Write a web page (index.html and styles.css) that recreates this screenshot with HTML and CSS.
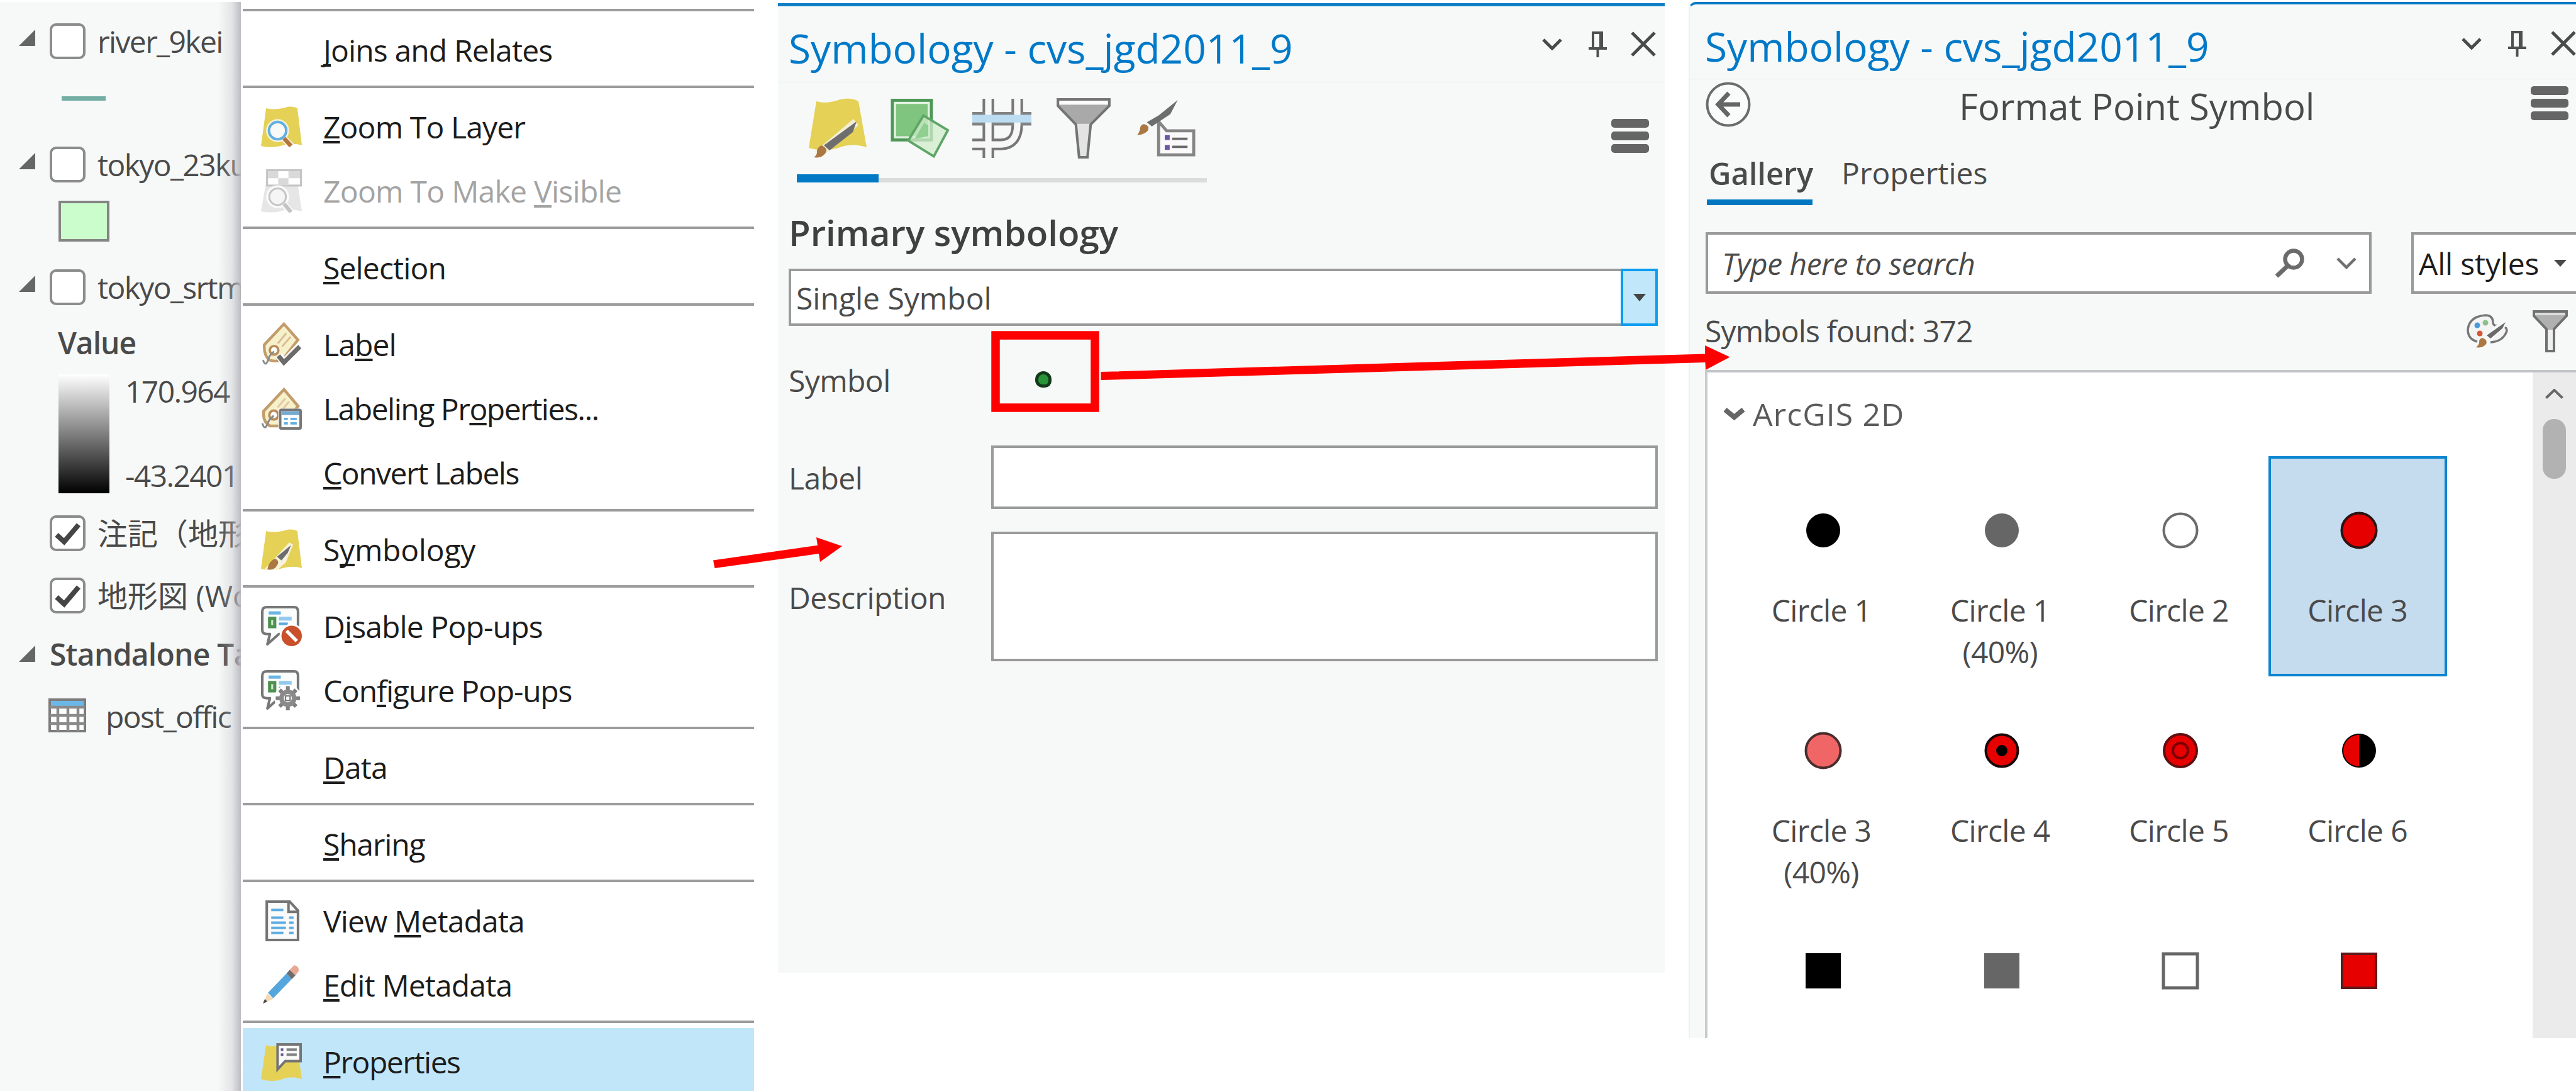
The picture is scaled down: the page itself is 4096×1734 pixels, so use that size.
FILE: index.html
```html
<!DOCTYPE html>
<html lang="en">
<head>
<meta charset="utf-8">
<title>Symbology - cvs_jgd2011_9</title>
<link rel="stylesheet" href="styles.css">
</head>
<body>
<svg class="defs" width="0" height="0">
  <defs>
    <path id="sheet" d="M8 3C20 6 31 4 41 1C48 0 53 1 57 3L64 61C54 58 45 58 34 61C24 64 11 65 0 62Z" fill="#e5d155"/>
    <g id="chevron"><path d="M2 3L16 17L30 3" fill="none" stroke="#4a4a4a" stroke-width="5"/></g>
    <g id="pin"><path d="M6 2H23M7 0V27M20 0V27" fill="none" stroke="#4f4f4f" stroke-width="4"/><path d="M17 2H23V27H17Z" fill="#4f4f4f"/><path d="M0 27H29" stroke="#4f4f4f" stroke-width="4"/><path d="M14.500 27V41" stroke="#4f4f4f" stroke-width="4"/></g>
    <g id="close"><path d="M2 2L38 38M38 2L2 38" fill="none" stroke="#4a4a4a" stroke-width="5"/></g>
    <g id="bars" fill="#656565"><rect width="60" height="14" rx="5"/><rect y="20" width="60" height="14" rx="5"/><rect y="40" width="60" height="14" rx="5"/></g>
    <path id="tri" d="M26 0V26H0Z" fill="#666"/>
    <path id="tick" d="M11 31L23 42L46 15" fill="none" stroke="#454545" stroke-width="8"/>
    <g id="popup"><path d="M9 2H52Q58 2 58 9V38Q58 44 52 44H28L10 60L14 44H9Q2 44 2 38V9Q2 2 9 2Z" fill="#fbfcfc" stroke="#777" stroke-width="4" stroke-linejoin="round"/><path d="M12 11H31" stroke="#6bb5e4" stroke-width="5"/><rect x="13.500" y="19.500" width="8" height="13" fill="#cfe6d0" stroke="#4f9250" stroke-width="5"/><path d="M28 20H48" stroke="#93c9ec" stroke-width="6"/><path d="M28 28H42" stroke="#5cabe0" stroke-width="4"/></g>
  </defs>
</svg>

<main class="board">
  <section class="tree">
    <div class="node n-river"><svg class="twist" viewBox="0 0 26 26"><use href="#tri"/></svg><span class="box"></span><span class="name">river_9kei</span></div>
    <div class="line-swatch"></div>
    <div class="node n-ku"><svg class="twist" viewBox="0 0 26 26"><use href="#tri"/></svg><span class="box"></span><span class="name">tokyo_23ku</span></div>
    <div class="fill-swatch"></div>
    <div class="node n-srtm"><svg class="twist" viewBox="0 0 26 26"><use href="#tri"/></svg><span class="box"></span><span class="name">tokyo_srtm</span></div>
    <div class="value">Value</div>
    <div class="ramp-row"><div class="ramp"></div><div class="ramp-text"><span>170.964</span><span>-43.2401</span></div></div>
    <div class="node n-note"><span class="box"><svg viewBox="0 0 57 57"><use href="#tick"/></svg></span><span class="name jp">注記（地形</span></div>
    <div class="node n-topo"><span class="box"><svg viewBox="0 0 57 57"><use href="#tick"/></svg></span><span class="name jp">地形図 (Wo</span></div>
    <div class="node n-tables"><svg class="twist" viewBox="0 0 26 26"><use href="#tri"/></svg><span class="heading">Standalone Ta</span></div>
    <div class="node n-post"><svg class="table" viewBox="0 0 60 54"><rect x="2" y="2" width="56" height="50" fill="#fff" stroke="#7c7c7c" stroke-width="4"/><rect x="4" y="4" width="52" height="8" fill="#6bb8e8"/><path d="M2 14H58M2 27H58M2 40H58M15 14V52M31 14V52M47 14V52" stroke="#8a8a8a" stroke-width="4.500"/></svg><span class="name">post_offic</span></div>
  </section>

  <nav class="menu">
    <hr>
    <div class="item"><span class="ico"></span><span><u>J</u>oins and Relates</span></div>
    <hr>
    <div class="item"><span class="ico"><svg viewBox="0 0 64 64"><use href="#sheet"/><circle cx="26" cy="38" r="18" fill="#f6f2dc"/><path d="M35 50L48 62" stroke="#f6f2dc" stroke-width="10"/><circle cx="26" cy="38" r="13.500" fill="#f8f8f6" stroke="#63afe0" stroke-width="4"/><path d="M36 50L47 62" stroke="#b5753f" stroke-width="6.500"/></svg></span><span><u>Z</u>oom To Layer</span></div>
    <div class="item off"><span class="ico"><svg viewBox="0 0 64 68"><path d="M8 20H57L64 66C50 62 40 62 30 66C20 68 10 68 0 66Z" fill="#e6e6e6"/><rect x="9.500" y="1.500" width="53" height="24" fill="#fff" stroke="#c4c4c4" stroke-width="3"/><path d="M11 3H27V14H11ZM43 3H61V14H43ZM27 14H43V25H27Z" fill="#d9d9d9"/><circle cx="26" cy="43" r="18" fill="#fafafa"/><circle cx="26" cy="43" r="13" fill="#f5f5f5" stroke="#c6c6c6" stroke-width="3"/><path d="M35 54L47 67" stroke="#fafafa" stroke-width="10"/><path d="M36 54L47 67" stroke="#c3c3c3" stroke-width="6"/></svg></span><span>Zoom To Make <u>V</u>isible</span></div>
    <hr>
    <div class="item"><span class="ico"></span><span><u>S</u>election</span></div>
    <hr>
    <div class="item"><span class="ico"><svg viewBox="0 0 64 72"><path d="M36 3L59 29L35 60Q24 66 12 62Q4 54 4 42V37Z" fill="#f6f0cb" stroke="#c39c6c" stroke-width="4.500"/><path d="M26 35L40 18M33 40L47 24" stroke="#d9bd94" stroke-width="3"/><circle cx="20" cy="46" r="7" fill="#fff" stroke="#b98e5c" stroke-width="4"/><path d="M2 62Q6 74 10 62Q12 54 20 48" fill="none" stroke="#8a8a8a" stroke-width="3"/><path d="M28 54L36 66L62 39" fill="none" stroke="#fff" stroke-width="12"/><path d="M27 55L36 66L62 40" fill="none" stroke="#6c6c6c" stroke-width="7.500"/></svg></span><span>La<u>b</u>el</span></div>
    <div class="item"><span class="ico"><svg viewBox="0 0 64 66"><path d="M36 3L58 29L35 60H14Q4 54 4 42V37Z" fill="#f6f0cb" stroke="#c39c6c" stroke-width="4.500"/><path d="M26 31L38 17M33 35L44 22" stroke="#e2caa2" stroke-width="3"/><circle cx="20" cy="43" r="7" fill="#fff" stroke="#b98e5c" stroke-width="4"/><path d="M2 56Q6 68 10 57Q12 50 20 44" fill="none" stroke="#8a8a8a" stroke-width="3"/><rect x="27" y="33" width="37" height="33" fill="#fff"/><rect x="30" y="35" width="32" height="29" rx="2" fill="#fff" stroke="#777" stroke-width="4"/><rect x="32" y="37" width="28" height="6" fill="#76a9cf"/><path d="M36 49H42M46 49H56M36 56H42M46 56H56" stroke="#63afe0" stroke-width="3.500"/></svg></span><span class="tight">Labeling Pr<u>o</u>perties...</span></div>
    <div class="item"><span class="ico"></span><span class="tight"><u>C</u>onvert Labels</span></div>
    <hr>
    <div class="item"><span class="ico"><svg viewBox="0 0 64 64"><use href="#sheet"/><path d="M47 23L26 46L9 64H20L36 50Z" fill="#f6f2dc" stroke="#f6f2dc" stroke-width="7"/><path d="M47 25L42 37L32 49L25 43Z" fill="#6d6d6d"/><path d="M22 46Q30 50 25 57Q20 65 10 63Q12 50 22 46Z" fill="#ab7743"/></svg></span><span class="loose">S<u>y</u>mbology</span></div>
    <hr>
    <div class="item"><span class="ico"><svg viewBox="0 0 64 64"><use href="#popup"/><circle cx="48" cy="47" r="19" fill="#fff"/><circle cx="48" cy="47" r="16" fill="#c9502a"/><path d="M40 39L56 55" stroke="#fff" stroke-width="5.500"/></svg></span><span>D<u>i</u>sable Pop-ups</span></div>
    <div class="item"><span class="ico"><svg viewBox="0 0 64 64"><use href="#popup"/><circle cx="42" cy="44" r="21" fill="#fff"/><path d="M42 25V63M23 44H61M29 31L55 57M55 31L29 57" stroke="#808080" stroke-width="6"/><circle cx="42" cy="44" r="10" fill="#eee" stroke="#8a8a8a" stroke-width="7"/><rect x="38.500" y="40.500" width="7" height="7" fill="#fff" stroke="#777" stroke-width="2"/></svg></span><span class="snug">Con<u>f</u>igure Pop-ups</span></div>
    <hr>
    <div class="item"><span class="ico"></span><span><u>D</u>ata</span></div>
    <hr>
    <div class="item"><span class="ico"></span><span class="snug"><u>S</u>haring</span></div>
    <hr>
    <div class="item"><span class="ico"><svg viewBox="0 0 64 64"><path d="M9 2H45L58 16V62H9Z" fill="#fafafa" stroke="#747474" stroke-width="4"/><path d="M43 2V18H58" fill="none" stroke="#747474" stroke-width="4"/><path d="M16 15H35M16 27H35M44 27H51M16 35H39M44 35H51M16 43H39M44 43H51M16 51H35M44 51H51" stroke="#5eace0" stroke-width="4"/></svg></span><span>View <u>M</u>etadata</span></div>
    <div class="item"><span class="ico"><svg viewBox="0 0 64 64"><path d="M4 60L10 45L19 54Z" fill="#f3d9b6"/><path d="M3 61L6 54L10 58Z" fill="#4b4b4b"/><path d="M11 44L40 14L48 23L19 53Z" fill="#55a6dc"/><path d="M40 14L45 8L54 17L48 23Z" fill="#6d6d6d"/><path d="M45 8L52 1Q60 3 59 10L54 17Z" fill="#e9a894"/></svg></span><span><u>E</u>dit Metadata</span></div>
    <hr>
    <div class="item active"><span class="ico"><svg viewBox="0 0 64 60"><path d="M8 4C14 7 20 6 26 4L60 30L64 57C54 54 44 53 34 57C24 61 10 61 0 57Z" fill="#e5d155"/><path d="M26 3H62V29H38L26 42Z" fill="#fafafa" stroke="#757575" stroke-width="4"/><path d="M31 11H35M31 19H35" stroke="#6b5aa0" stroke-width="4"/><path d="M40 11H56M40 19H56" stroke="#858585" stroke-width="4"/></svg></span><span class="tight"><u>P</u>roperties</span></div>
  </nav>

  <section class="pane symbology">
    <header class="pane-head"><h1>Symbology - cvs_jgd2011_9</h1><div class="tools"><svg class="i-chev" viewBox="0 0 32 20"><use href="#chevron"/></svg><svg class="i-pin" viewBox="0 0 29 41"><use href="#pin"/></svg><svg class="i-close" viewBox="0 0 40 40"><use href="#close"/></svg></div></header>
    <div class="icon-tabs">
      <span class="icon-tab on"><svg viewBox="0 0 92 96"><path d="M12 5C26 9 38 6 50 2C62 0 70 0 79 5L92 78C78 74 66 73 50 78C34 84 16 84 0 79Z" fill="#e5d155"/><path d="M75 38L26 80L14 90" fill="none" stroke="#f4efd2" stroke-width="13"/><path d="M76 37L70 54L33 83L24 75Z" fill="#6e6e6e"/><path d="M20 75Q32 80 26 88Q20 96 8 94Q14 90 13 84Q14 78 20 75Z" fill="#ab7743"/></svg></span>
      <span class="icon-tab"><svg viewBox="0 0 97 98"><rect x="3" y="3" width="64" height="65" fill="#e4f3e4" stroke="#4f9756" stroke-width="5"/><rect x="9" y="9" width="52" height="53" fill="#7fc47f"/><path d="M54 28L94 52L71 95L29 69Z" fill="#cfebcb" fill-opacity=".75" stroke="#5fa566" stroke-width="4"/><path d="M55 40L62 44V62L40 66Z" fill="#8fcf8f"/></svg></span>
      <span class="icon-tab"><svg viewBox="0 0 92 92"><g fill="none"><path d="M0 71H45Q70 70 70 40V0" stroke="#777" stroke-width="18"/><path d="M25 0V92" stroke="#777" stroke-width="18"/><path d="M0 31H92" stroke="#838383" stroke-width="21"/><path d="M0 71H45Q70 70 70 40V0M25 0V92" stroke="#f7f7f7" stroke-width="10"/><path d="M0 31H92" stroke="#bbdcf1" stroke-width="12"/></g></svg></span>
      <span class="icon-tab"><svg viewBox="0 0 86 94"><path d="M3 3H83V12L54 41L49 91H36L31 41L3 12Z" fill="#e3e3e3"/><path d="M3 10H83L54 40H31Z" fill="#a9a9a9"/><path d="M3 3H83V10H3Z" fill="#fbfbfb"/><path d="M3 2H83V12L54 41L49 92H36L31 41L3 12Z" fill="none" stroke="#747474" stroke-width="4"/></svg></span>
      <span class="icon-tab"><svg viewBox="0 0 96 94"><path d="M36 36V90H93V51H49Z" fill="#fafafa" stroke="#858585" stroke-width="5"/><path d="M46 62H54M46 78H54" stroke="#6e55a5" stroke-width="8"/><path d="M58 64H83M58 77H83" stroke="#6a6a6a" stroke-width="4"/><path d="M67 1L55 24L25 44L17 37L36 26Z" fill="#6e6e6e"/><path d="M12 40Q22 42 19 50Q14 57 1 58Q6 52 6 46Q7 41 12 40Z" fill="#ab7743"/></svg></span>
      <svg class="i-bars" viewBox="0 0 60 54"><use href="#bars"/></svg>
    </div>
    <h2>Primary symbology</h2>
    <div class="select"><span>Single Symbol</span><span class="drop"><svg viewBox="0 0 20 12"><path d="M0 0H20L10 12Z" fill="#454545"/></svg></span></div>
    <div class="form">
      <label class="f-symbol">Symbol</label><div class="f-symbol"><span class="point"></span></div>
      <label class="f-label">Label</label><div class="f-label field"></div>
      <label class="f-desc">Description</label><div class="f-desc field"></div>
    </div>
  </section>

  <section class="pane format">
    <header class="pane-head"><h1>Symbology - cvs_jgd2011_9</h1><div class="tools"><svg class="i-chev" viewBox="0 0 32 20"><use href="#chevron"/></svg><svg class="i-pin" viewBox="0 0 29 41"><use href="#pin"/></svg><svg class="i-close" viewBox="0 0 40 40"><use href="#close"/></svg></div></header>
    <div class="sub"><svg class="i-back" viewBox="0 0 72 72"><circle cx="36" cy="36" r="33.500" fill="#fafbfb" stroke="#6c6c6c" stroke-width="4"/><path d="M55 36H20M37 18L20 36L37 54" fill="none" stroke="#666" stroke-width="7"/></svg><h2>Format Point Symbol</h2><svg class="i-bars" viewBox="0 0 60 54"><use href="#bars"/></svg></div>
    <div class="text-tabs"><span class="text-tab on">Gallery</span><span class="text-tab">Properties</span></div>
    <div class="search-row">
      <div class="search"><i>Type here to search</i><svg class="i-find" viewBox="0 0 46 46"><circle cx="29" cy="17" r="13.500" fill="none" stroke="#6b6b6b" stroke-width="6.500"/><path d="M20 27L2 44" stroke="#6b6b6b" stroke-width="7"/></svg><svg class="i-chev" viewBox="0 0 32 20"><path d="M2 3L16 17L30 3" fill="none" stroke="#707070" stroke-width="4.500"/></svg></div>
      <div class="styles"><span>All styles</span><svg viewBox="0 0 20 11"><path d="M0 0H20L10 11Z" fill="#4a4a4a"/></svg></div>
    </div>
    <div class="found"><span>Symbols found: 372</span><svg class="i-palette" viewBox="0 0 66 54"><path d="M17 44Q2 40 2 25Q4 4 30 2Q42 2 42 14Q43 20 50 18Q64 18 64 27Q58 44 38 45" fill="#f4f4f4" stroke="#777" stroke-width="3.500"/><circle cx="17" cy="18" r="4.500" fill="#4a9bdb"/><circle cx="30" cy="14" r="4.500" fill="#8cc08c"/><circle cx="21" cy="31" r="4.500" fill="#d2583a"/><path d="M63 11L30 42" stroke="#f7f9f8" stroke-width="12"/><path d="M62 13L57 23L38 39L32 34Z" fill="#6a6a6a"/><path d="M25 38Q34 41 31 48Q25 55 15 53Q21 48 20 43Q21 39 25 38Z" fill="#ab7743"/></svg><svg class="i-funnel" viewBox="0 0 56 67"><path d="M2 2H54V9L34 30V65H22V30L2 9Z" fill="#b0b0b0"/><path d="M4 4H52V8H4Z" fill="#ddd"/><path d="M24 31H32V64H24Z" fill="#f0f0f0"/><path d="M2 2H54V9L34 30V65H22V30L2 9Z" fill="none" stroke="#707070" stroke-width="4"/></svg></div>
    <div class="list">
      <div class="content">
        <div class="group"><svg viewBox="0 0 33 21"><path d="M2 4L16.500 16L31 4" fill="none" stroke="#666" stroke-width="8"/></svg><span>ArcGIS 2D</span></div>
        <div class="grid">
          <div class="cell"><svg viewBox="0 0 60 60"><circle cx="30" cy="30" r="27" fill="#000"/></svg><span>Circle 1</span></div>
          <div class="cell"><svg viewBox="0 0 60 60"><circle cx="30" cy="30" r="27" fill="#666"/></svg><span>Circle 1<br>(40%)</span></div>
          <div class="cell"><svg viewBox="0 0 60 60"><circle cx="30" cy="30" r="26.500" fill="#fff" stroke="#6b6b6b" stroke-width="4"/></svg><span>Circle 2</span></div>
          <div class="cell picked"><svg viewBox="0 0 60 60"><circle cx="30" cy="30" r="27.500" fill="#e60000" stroke="#2b1414" stroke-width="4"/></svg><span>Circle 3</span></div>
          <div class="cell"><svg viewBox="0 0 60 60"><circle cx="30" cy="30" r="27.500" fill="#f06666" stroke="#4a2d2d" stroke-width="4"/></svg><span>Circle 3<br>(40%)</span></div>
          <div class="cell"><svg viewBox="0 0 60 60"><circle cx="30" cy="30" r="25.500" fill="#e60000" stroke="#1a0808" stroke-width="4"/><circle cx="30" cy="30" r="9" fill="#000"/></svg><span>Circle 4</span></div>
          <div class="cell"><svg viewBox="0 0 60 60"><circle cx="30" cy="30" r="26" fill="#e60000" stroke="#5e1010" stroke-width="4"/><circle cx="30" cy="30" r="12" fill="#e60000" stroke="#7a0000" stroke-width="4"/></svg><span>Circle 5</span></div>
          <div class="cell"><svg viewBox="0 0 60 60"><circle cx="30" cy="30" r="27" fill="#000"/><path d="M30 5A25 25 0 0 0 30 55Z" fill="#e60000"/></svg><span>Circle 6</span></div>
          <div class="cell"><svg viewBox="0 0 60 60"><rect x="2" y="2" width="56" height="56" fill="#000"/></svg></div>
          <div class="cell"><svg viewBox="0 0 60 60"><rect x="2" y="2" width="56" height="56" fill="#666"/></svg></div>
          <div class="cell"><svg viewBox="0 0 60 60"><rect x="3" y="3" width="54" height="54" fill="#fff" stroke="#666" stroke-width="5"/></svg></div>
          <div class="cell"><svg viewBox="0 0 60 60"><rect x="3" y="3" width="54" height="54" fill="#e60000" stroke="#5e1a1a" stroke-width="4"/></svg></div>
        </div>
      </div>
      <div class="scroll"><svg viewBox="0 0 29 16"><path d="M1.500 14.500L14.500 2L27.500 14.500" fill="none" stroke="#686868" stroke-width="4"/></svg><span class="thumb"></span></div>
    </div>
  </section>

  <svg class="notes" viewBox="0 0 4096 1734">
    <path fill="#f00" d="M1134 890.500L1300 866.700L1298 854L1339 868L1304 893L1302 880L1136.500 903Z"/>
    <path fill="#f00" d="M1750.600 591L2711 562.500L2711 549L2750.600 567.600L2712 588L2711.500 576L1750.600 604Z"/>
    <rect x="1583" y="533" width="158" height="115" fill="none" stroke="#f00" stroke-width="13.500"/>
  </svg>
</main>
</body>
</html>
```
FILE: styles.css
```css
* { box-sizing: border-box; }

body {
  margin: 0;
  background: #fff;
  color: #4a4a4a;
  font-family: "Open Sans", "Noto Sans", "Noto Sans CJK JP", sans-serif;
  font-size: 48px;
  line-height: 50px;
  white-space: nowrap;
}

h1, h2 { margin: 0; font-weight: 400; }
svg { display: block; flex: none; }
.defs { position: absolute; }

.board {
  position: relative;
  display: flex;
  align-items: flex-start;
  width: 4096px;
  height: 1734px;
  overflow: hidden;
}

/* Contents tree */
.tree {
  position: relative;
  flex: none;
  width: 383px;
  height: 1731px;
  margin-top: 3px;
  padding-top: 34px;
  background: #f7f9f8;
  letter-spacing: -.034em;
  overflow: hidden;
}
.tree::after {
  content: "";
  position: absolute;
  top: 0;
  right: 0;
  width: 36px;
  height: 100%;
  background: linear-gradient(to right, rgba(190, 190, 196, 0), rgba(190, 190, 196, .35) 60%, rgba(185, 185, 192, .95));
}
.node { display: flex; align-items: center; height: 57px; }
.twist { width: 26px; height: 26px; margin: 0 23px 12px 30px; }
.name { padding-top: 1px; }
.box {
  flex: none;
  width: 57px;
  height: 57px;
  margin-right: 19px;
  border: 4px solid #8c8c8c;
  border-radius: 10px;
  background: #fff;
}
.box svg { width: 57px; height: 57px; margin: -4px; }
.line-swatch { width: 70px; height: 7px; margin: 59px 0 0 98px; background: #72aea4; }
.n-ku { margin-top: 73px; }
.fill-swatch { width: 81px; height: 65px; margin: 29px 0 0 93px; border: 4px solid #848484; background: #cbfccb; }
.n-srtm { margin-top: 44px; }
.value { margin: 35px 0 0 92px; font-weight: 600; letter-spacing: -.022em; }
.ramp-row { display: flex; height: 189px; margin: 25px 0 0 93px; }
.ramp { width: 81px; background: linear-gradient(#fff, #000); }
.ramp-text { display: flex; flex-direction: column; align-items: flex-start; justify-content: space-between; padding: 2px 0 3px 25px; }
.n-note { margin-top: 35px; padding-left: 79px; }
.n-topo { margin-top: 42px; padding-left: 79px; }
.jp { font-family: "Open Sans", "Noto Sans CJK JP", sans-serif; letter-spacing: 0; }
.n-tables { height: 50px; margin-top: 39px; letter-spacing: -.016em; }
.n-tables .twist { margin-bottom: 0; }
.heading { padding-top: 2px; font-weight: 600; }
.n-post { height: 54px; margin-top: 46px; padding: 2px 0 0 77px; }
.table { width: 60px; height: 54px; margin: -2px 31px 0 0; }

/* Layer context menu */
.menu {
  flex: none;
  width: 818px;
  height: 1731px;
  margin-top: 3px;
  padding: 3.8px 2px 0 3px;
  background: #fff;
  color: #1c1c1c;
  letter-spacing: -.018em;
  overflow: hidden;
}
.menu hr { height: 4px; margin: 7.7px 0; border: 0; background: #9c9c9c; }
.item { display: flex; align-items: center; height: 102.4px; padding: 5px 0 0 29px; }
.ico { display: flex; align-items: center; width: 65px; height: 70px; margin: -1px 34px 0 0; }
.ico svg { width: 65px; max-height: 70px; }
.item u { text-decoration-thickness: 4px; text-underline-offset: 4px; text-decoration-skip-ink: none; }
.item.off { color: #a3a3a3; letter-spacing: -.015em; }
.item.active { background: #c1e6fa; }
.snug { letter-spacing: -.025em; }
.tight { letter-spacing: -.031em; }
.loose { letter-spacing: -.005em; }

/* Docked panes */
.pane { flex: none; background: #f7f9f8; }
.pane-head { display: flex; justify-content: space-between; border-bottom: 2px solid #f1f5f6; }
.pane-head h1 { color: #0079c8; font-size: 64px; line-height: 84px; }
.tools { display: flex; align-items: center; }
.i-chev { width: 32px; height: 20px; }
.i-pin { width: 29px; height: 41px; }
.i-close { width: 40px; height: 40px; }
.i-bars { width: 60px; height: 54px; }

.symbology { width: 1410px; height: 1541px; margin: 5px 38px 0 36px; border-top: 5px solid #0e7fc5; }
.symbology .pane-head { height: 122px; padding: 0 14px 0 17px; }
.symbology h1 { padding-top: 25px; }
.symbology .i-chev { margin-right: 42px; }
.symbology .i-pin { margin-right: 38px; }
.icon-tabs { display: flex; height: 158px; padding: 0 25px 0 30px; }
.icon-tab {
  display: flex;
  justify-content: center;
  width: 130.4px;
  padding-top: 24px;
  border-bottom: 7px solid #dcdcdc;
}
.icon-tab svg { width: 94px; height: 96px; }
.icon-tab.on { border-bottom: 13px solid #007ac6; }
.icon-tabs .i-bars { margin: 57px 0 0 auto; }
.symbology h2 { height: 137px; padding: 40px 0 0 17px; color: #404040; font-size: 56.5px; font-weight: 600; line-height: 80px; }
.select {
  display: flex;
  align-items: center;
  justify-content: space-between;
  height: 91px;
  margin: 0 11px 0 17px;
  padding: 2px 0 0 8px;
  border: 4px solid #9a9a9a;
  background: #fff;
}
.drop {
  display: flex;
  align-items: center;
  justify-content: center;
  width: 59px;
  height: 91px;
  margin: -2px -4px 0 0;
  border: 4px solid #0b9df0;
  background: #c1e7fb;
}
.drop svg { width: 20px; height: 12px; }
.form {
  display: grid;
  grid-template-columns: 322px 1060px;
  grid-template-rows: 170px 101px 206px;
  margin-left: 17px;
  letter-spacing: -.012em;
}
.form > * { display: flex; align-items: center; }
.form label { padding-top: 3px; }
.f-label { margin-top: 20px; height: 101px; }
.f-desc { margin-top: 56px; height: 206px; }
.field { border: 4px solid #9a9a9a; background: #fff; }
.point { width: 26px; height: 26px; margin-left: 70px; border: 5px solid #143a1c; border-radius: 50% 50% 40% 45%; background: #2a9538; }

.format {
  width: 1411px;
  height: 1647px;
  margin-top: 3px;
  border-top: 4px solid #0078c3;
  border-left: 2px solid #e8f0f5;
  border-top-left-radius: 12px;
}
.format .pane-head { height: 120px; padding-left: 24px; }
.format h1 { padding-top: 25px; }
.format .tools { padding-top: 6px; }
.format .pane-head .i-chev { margin-right: 42px; }
.format .i-pin { margin-right: 39px; }
.sub { display: flex; align-items: center; height: 83px; padding: 0 12px 5px 25px; }
.i-back { width: 72px; height: 72px; }
.sub h2 { padding: 6px 0 0 331px; font-size: 58px; }
.sub .i-bars { margin: -4px 0 0 auto; }
.text-tabs { display: flex; padding: 23px 0 0 27px; line-height: 84px; }
.text-tab { border-bottom: 9px solid transparent; padding-left: 3px; margin-right: 43px; }
.text-tab.on { width: 168px; border-color: #0077c0; font-size: 49px; font-weight: 600; letter-spacing: -.002em; }
.search-row { display: flex; height: 98px; margin: 43px 0 0 25px; }
.search, .styles { display: flex; align-items: center; border: 4px solid #999; background: #fff; }
.search { width: 1059px; padding: 0 20px 0 22px; letter-spacing: -.011em; }
.search i, .styles span { padding-top: 2px; }
.i-find { width: 46px; height: 46px; margin: 0 51px 0 auto; }
.styles { flex: 1; margin-left: 63px; padding-left: 8px; border-right: 0; color: #1c1c1c; letter-spacing: -.004em; }
.styles svg { width: 20px; height: 11px; margin-left: 24px; }
.found { display: flex; align-items: center; height: 121px; padding: 0 13px 3px 24px; letter-spacing: -.018em; }
.i-palette { width: 66px; height: 54px; margin: 0 39px 0 auto; }
.i-funnel { width: 56px; height: 67px; }
.list {
  display: flex;
  height: 1062px;
  margin-left: 24px;
  border-top: 4px solid #c2c5c8;
  border-left: 4px solid #c8cbce;
  background: #fff;
  overflow: hidden;
}
.content { width: 1312px; }
.group { display: flex; align-items: center; height: 133px; padding: 0 0 1px 26px; color: #5a5a5a; font-size: 50px; letter-spacing: .022em; }
.group svg { width: 33px; height: 21px; margin: -2px 13px 0 0; }
.grid { display: grid; grid-template-columns: repeat(4, 284.2px); grid-auto-rows: 350px; padding-left: 39px; }
.cell {
  display: flex;
  flex-direction: column;
  align-items: center;
  gap: 64px;
  padding-top: 84px;
  border: 4px solid transparent;
  line-height: 66px;
  text-align: center;
  letter-spacing: -.014em;
}
.cell svg { width: 60px; height: 60px; margin-left: 5px; }
.cell.picked { border-color: #0b85d0; background: #c5dbee; }
.scroll { flex: 1; display: flex; flex-direction: column; align-items: center; padding-top: 26px; background: #ebebeb; }
.scroll svg { width: 29px; height: 16px; }
.thumb { width: 37px; height: 95px; margin-top: 32px; border-radius: 18px; background: #b2b2b2; }

/* Callout arrows and highlight box */
.notes { position: absolute; left: 0; top: 0; width: 4096px; height: 1734px; }
```
